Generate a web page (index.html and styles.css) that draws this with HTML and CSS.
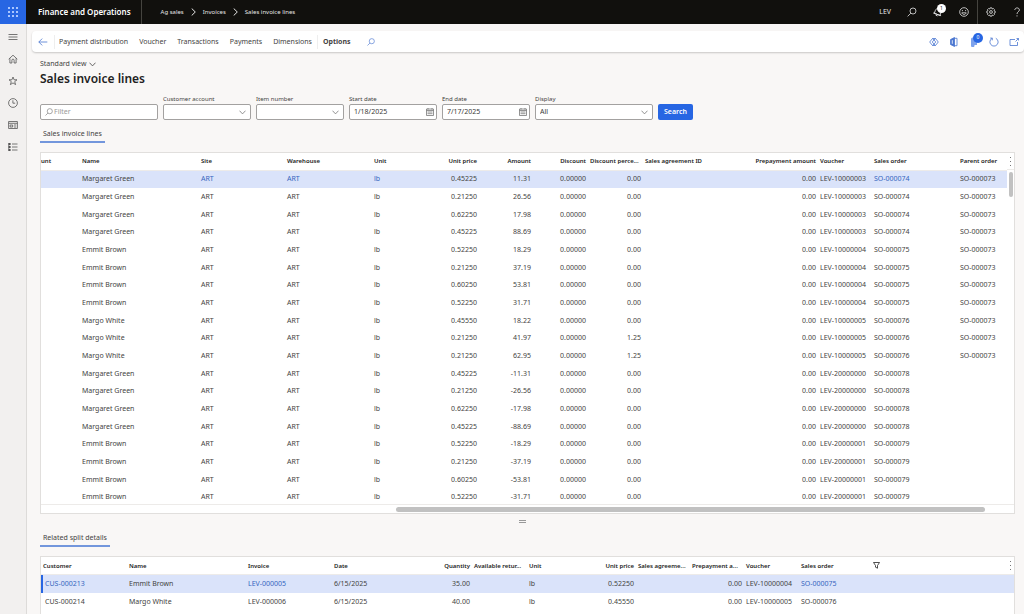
FILE: index.html
```html
<!DOCTYPE html>
<html lang="en">

<head>
    <meta charset="UTF-8">
    <meta name="viewport" content="width=device-width, initial-scale=1.0">
    <title>Sales invoice lines</title>
    <link rel="stylesheet" href="styles.css">
</head>

<body>
    <header class="topbar">
        <button class="launcher" aria-label="App launcher">
            <svg width="10" height="10" viewBox="0 0 10 10" fill="#a9c6ff">
                <path d="M0 0h2v2H0zM4 0h2v2H4zM8 0h2v2H8zM0 4h2v2H0zM4 4h2v2H4zM8 4h2v2H8zM0 8h2v2H0zM4 8h2v2H4zM8 8h2v2H8z" />
            </svg>
        </button>
        <a href="#" class="brand">Finance and Operations</a>
        <nav class="breadcrumb" aria-label="Breadcrumb">
            <a href="#">Ag sales</a>
            <svg width="5" height="8" viewBox="0 0 5 8" class="line"><path d="M.7.5 4.3 4 .7 7.5" /></svg>
            <a href="#">Invoices</a>
            <svg width="5" height="8" viewBox="0 0 5 8" class="line"><path d="M.7.5 4.3 4 .7 7.5" /></svg>
            <a href="#">Sales invoice lines</a>
        </nav>
        <div class="top-tools">
            <span class="company">LEV</span>
            <button aria-label="Search">
                <svg width="10" height="10" viewBox="0 0 10 10" class="line"><circle cx="6" cy="4" r="3" /><path d="M3.8 6.2.6 9.4" /></svg>
            </button>
            <button class="has-badge" aria-label="Notifications">
                <svg width="10" height="10" viewBox="0 0 10 10" class="line"><path d="M2 7.5V4.3a3 3 0 0 1 6 0v3.2zM.8 7.5h8.4M4 8.8h2" transform="rotate(20 5 5)" /></svg>
                <span class="badge light">1</span>
            </button>
            <button aria-label="Feedback">
                <svg width="10" height="10" viewBox="0 0 10 10" class="line"><circle cx="5" cy="5" r="4.3" /><path d="M2.8 5.800c.7 2.200 3.700 2.200 4.400 0zM3.4 3v1.200M6.600 3v1.200" /></svg>
            </button>
            <button class="divided" aria-label="Settings">
                <svg width="10" height="10" viewBox="0 0 10 10" class="line"><circle cx="5" cy="5" r="1.4" /><path d="m4.200.8h1.600l.4 1.200 1.200-.5 1.100 1.100-.5 1.200 1.200.4v1.600l-1.200.4.5 1.200-1.100 1.100-1.200-.5-.4 1.200H4.200L3.800 8l-1.200.5-1.100-1.100.5-1.200-1.200-.4V4.200L2 3.800l-.5-1.200 1.100-1.100 1.200.5z" /></svg>
            </button>
            <button class="help" aria-label="Help">
                <svg width="10" height="10" viewBox="0 0 10 10" class="line"><path d="M2.8 3C2.8.2 7.4.2 7.4 3 7.4 4.8 5 4.7 5 7M5 8.3v1.2" /></svg>
            </button>
        </div>
    </header>

    <div class="shell">
        <nav class="sidebar" aria-label="Main">
            <button aria-label="Expand navigation">
                <svg width="10" height="10" viewBox="0 0 10 10" class="line"><path d="M.5 2.5h9M.5 5h9M.5 7.5h9" /></svg>
            </button>
            <button aria-label="Home">
                <svg width="10" height="10" viewBox="0 0 10 10" class="line"><path d="M.7 5.2 5 1.2l4.300 4M1.900 4.300V9h2V6.200a1.100 1.100 0 0 1 2.200 0V9h2V4.300" /></svg>
            </button>
            <button aria-label="Favorites">
                <svg width="10" height="10" viewBox="0 0 10 10" class="line"><path d="m5 1 1.100 2.800h2.900L6.700 5.600l.9 3L5 6.900 2.400 8.600l.9-3L1 3.800h2.900z" /></svg>
            </button>
            <button aria-label="Recent">
                <svg width="10" height="10" viewBox="0 0 10 10" class="line"><circle cx="5" cy="5" r="4.4" /><path d="M4.900 2.300V5.200h2.300" /></svg>
            </button>
            <button aria-label="Workspaces">
                <svg width="10" height="10" viewBox="0 0 10 10" class="line"><path d="M.6 1.500h8.800v7H.6zM.6 3.300h8.800M2.100 5h2.600v2H2.100zM6 5h2.200M6 7h2.200" /></svg>
            </button>
            <button aria-label="Modules">
                <svg width="10" height="10" viewBox="0 0 10 10" class="line"><path d="M.6 2h2M.6 5h2M.6 8h2" stroke-width="2" /><path d="M.8 1v8M4 2h5.500M4 5h5.500M4 8h5.500" /></svg>
            </button>
        </nav>

        <main class="content">
            <div class="action-bar">
                <button class="icon-btn back" aria-label="Back">
                    <svg width="10" height="8" viewBox="0 0 10 8" class="line"><path d="M9.300 4H.8M4.200.6.8 4l3.400 3.400" /></svg>
                </button>
                <div class="menu">
                    <button>Payment distribution</button>
                    <button>Voucher</button>
                    <button>Transactions</button>
                    <button>Payments</button>
                    <button>Dimensions</button>
                </div>
                <button class="options">Options</button>
                <button class="icon-btn" aria-label="Search actions">
                    <svg width="8" height="8" viewBox="0 0 10 10" class="line"><circle cx="6" cy="4" r="3.2" /><path d="M3.700 6.300.6 9.400" /></svg>
                </button>
                <div class="page-tools">
                    <button class="icon-btn" aria-label="Power Apps">
                        <svg width="10" height="10" viewBox="0 0 10 10" class="line"><path d="M3.500 1.500h3L9.300 5 6.500 8.500h-3L.7 5zM3.500 1.500 6.800 5 3.500 8.500M6.500 1.500 3.200 5l3.300 3.500" /></svg>
                    </button>
                    <button class="icon-btn" aria-label="Office">
                        <svg width="10" height="10" viewBox="0 0 10 10" class="line"><path d="M5 1.300h3v7.400H5" /><path d="M1.500 2.500 5.500.5v9l-4-2z" fill="currentColor" /><path d="M3.300 3.200v3.600" stroke="#fff" /></svg>
                    </button>
                    <button class="icon-btn has-badge" aria-label="Attachments">
                        <svg width="10" height="10" viewBox="0 0 10 10"><path d="M2 2a1.500 1.500 0 0 1 1.500-1.500H8V8H5.500v.5a1.700 1.700 0 0 1-3.500 0z" fill="#7da2ec" /></svg>
                        <span class="badge">0</span>
                    </button>
                    <button class="icon-btn" aria-label="Refresh">
                        <svg width="10" height="10" viewBox="0 0 10 10" class="line"><path d="M6.800 1.300a4.100 4.100 0 1 1-3.600 0M3.300 3.300V1.100H1.200" /></svg>
                    </button>
                    <button class="icon-btn" aria-label="Open in new window">
                        <svg width="10" height="10" viewBox="0 0 10 10" class="line"><path d="M6 2.500H1v6h7.500V5M6.500 4.500l3-3M7.500 1.500h2v2" /></svg>
                    </button>
                </div>
            </div>

            <div class="page">
                <button class="view-picker">Standard view
                    <svg width="7" height="5" viewBox="0 0 7 5" class="line"><path d="m.5.7 3 3.200 3-3.200" /></svg>
                </button>
                <h1>Sales invoice lines</h1>

                <form class="filters">
                    <div class="field wide">
                        <div class="control">
                            <svg width="8" height="8" viewBox="0 0 10 10" class="line"><circle cx="6" cy="4" r="3.2" /><path d="M3.700 6.300.6 9.400" /></svg>
                            <input type="text" placeholder="Filter" aria-label="Filter">
                        </div>
                    </div>
                    <div class="field">
                        <label for="customer">Customer account</label>
                        <div class="control">
                            <select id="customer"><option></option></select>
                            <svg width="7" height="5" viewBox="0 0 7 5" class="line"><path d="m.5.7 3 3.200 3-3.200" /></svg>
                        </div>
                    </div>
                    <div class="field">
                        <label for="item">Item number</label>
                        <div class="control">
                            <select id="item"><option></option></select>
                            <svg width="7" height="5" viewBox="0 0 7 5" class="line"><path d="m.5.7 3 3.200 3-3.200" /></svg>
                        </div>
                    </div>
                    <div class="field">
                        <label for="start">Start date</label>
                        <div class="control date">
                            <input type="text" id="start" value="1/18/2025">
                            <svg width="8" height="8" viewBox="0 0 8 8" class="line"><path d="M.5 1h7v6.500h-7zM.5 2.500h7M2 0v1.500M6 0v1.500M1.500 4h5M1.500 5.700h5" /></svg>
                        </div>
                    </div>
                    <div class="field">
                        <label for="end">End date</label>
                        <div class="control date">
                            <input type="text" id="end" value="7/17/2025">
                            <svg width="8" height="8" viewBox="0 0 8 8" class="line"><path d="M.5 1h7v6.500h-7zM.5 2.500h7M2 0v1.500M6 0v1.500M1.500 4h5M1.500 5.700h5" /></svg>
                        </div>
                    </div>
                    <div class="field wide">
                        <label for="display">Display</label>
                        <div class="control">
                            <select id="display"><option>All</option></select>
                            <svg width="7" height="5" viewBox="0 0 7 5" class="line"><path d="m.5.7 3 3.200 3-3.200" /></svg>
                        </div>
                    </div>
                    <button type="button" class="search-btn">Search</button>
                </form>

                <h2 class="tab">Sales invoice lines</h2>
                <section class="grid lines-grid">
                    <div class="grid-body">
                        <table>
                            <colgroup>
                                <col class="w-39"><col class="w-119"><col class="w-86"><col class="w-87"><col class="w-53">
                                <col class="w-54"><col class="w-54"><col class="w-55"><col class="w-55"><col class="w-108">
                                <col class="w-67"><col class="w-54"><col class="w-86"><col class="w-49">
                            </colgroup>
                            <thead>
                                <tr>
                                    <th class="cut">unt</th>
                                    <th>Name</th>
                                    <th>Site</th>
                                    <th>Warehouse</th>
                                    <th>Unit</th>
                                    <th class="num">Unit price</th>
                                    <th class="num">Amount</th>
                                    <th class="num">Discount</th>
                                    <th>Discount perce...</th>
                                    <th>Sales agreement ID</th>
                                    <th class="num">Prepayment amount</th>
                                    <th>Voucher</th>
                                    <th>Sales order</th>
                                    <th>Parent order</th>
                                </tr>
                            </thead>
                            <tbody id="lines"></tbody>
                        </table>
                        <div class="rail">
                            <button class="more" aria-label="Grid options">
                                <svg width="1" height="9" viewBox="0 0 1 9" fill="#777"><path d="M0 0h1v1H0zM0 4h1v1H0zM0 8h1v1H0z" /></svg>
                            </button>
                            <div class="v-thumb"></div>
                        </div>
                    </div>
                    <div class="h-scroll"><div class="h-thumb"></div></div>
                </section>

                <div class="splitter"></div>

                <h2 class="tab">Related split details</h2>
                <section class="grid details-grid">
                    <div class="grid-body">
                        <table>
                            <colgroup>
                                <col class="w-86"><col class="w-119"><col class="w-86"><col class="w-87"><col class="w-53">
                                <col class="w-55"><col class="w-54"><col class="w-55"><col class="w-54"><col class="w-54">
                                <col class="w-55"><col class="w-72"><col>
                            </colgroup>
                            <thead>
                                <tr>
                                    <th>Customer</th>
                                    <th>Name</th>
                                    <th>Invoice</th>
                                    <th>Date</th>
                                    <th class="num">Quantity</th>
                                    <th>Available retur...</th>
                                    <th>Unit</th>
                                    <th class="num">Unit price</th>
                                    <th>Sales agreeme...</th>
                                    <th>Prepayment a...</th>
                                    <th>Voucher</th>
                                    <th>Sales order</th>
                                    <th>
                                        <div class="head-tools">
                                            <svg width="7" height="7" viewBox="0 0 7 7" class="line"><path d="M.5.5h6l-2 3v2.700l-2-1V3.500z" /></svg>
                                            <button class="more" aria-label="Grid options">
                                                <svg width="1" height="9" viewBox="0 0 1 9" fill="#777"><path d="M0 0h1v1H0zM0 4h1v1H0zM0 8h1v1H0z" /></svg>
                                            </button>
                                        </div>
                                    </th>
                                </tr>
                            </thead>
                            <tbody>
                                <tr class="selected marked">
                                    <td class="key"><a href="#">CUS-000213</a></td>
                                    <td>Emmit Brown</td>
                                    <td><a href="#">LEV-000005</a></td>
                                    <td>6/15/2025</td>
                                    <td class="num">35.00</td>
                                    <td></td>
                                    <td>lb</td>
                                    <td class="num">0.52250</td>
                                    <td></td>
                                    <td class="num">0.00</td>
                                    <td>LEV-10000004</td>
                                    <td><a href="#">SO-000075</a></td>
                                    <td></td>
                                </tr>
                                <tr>
                                    <td class="key">CUS-000214</td>
                                    <td>Margo White</td>
                                    <td>LEV-000006</td>
                                    <td>6/15/2025</td>
                                    <td class="num">40.00</td>
                                    <td></td>
                                    <td>lb</td>
                                    <td class="num">0.45550</td>
                                    <td></td>
                                    <td class="num">0.00</td>
                                    <td>LEV-10000005</td>
                                    <td>SO-000076</td>
                                    <td></td>
                                </tr>
                            </tbody>
                        </table>
                    </div>
                </section>
            </div>
        </main>
    </div>

    <script src="script.js"></script>
</body>

</html>
```
FILE: styles.css
```css
* {
    box-sizing: border-box;
}

body {
    margin: 0;
    height: 100vh;
    display: flex;
    flex-direction: column;
    overflow: hidden;
    background: #f9f7f6;
    color: #444342;
    font-family: "Noto Sans", "Open Sans", sans-serif;
    font-size: 7px;
    line-height: 10px;
}

button {
    display: flex;
    align-items: center;
    justify-content: center;
    padding: 0;
    border: 0;
    background: none;
    color: inherit;
    font: inherit;
    cursor: pointer;
}

a {
    color: inherit;
    text-decoration: none;
}

svg {
    display: block;
    flex: none;
}

.line {
    fill: none;
    stroke: currentColor;
    stroke-width: 0.8;
}

/* Top bar */
.topbar {
    display: flex;
    align-items: stretch;
    flex: none;
    height: 24px;
    background: #11100d;
    color: #e6e6e6;
}

.launcher {
    width: 26px;
    background: #2766e3;
}

.brand {
    display: flex;
    align-items: center;
    padding: 0 10px 0 12px;
    border-right: 1px solid #45443f;
    font-size: 8px;
    font-weight: 600;
    color: #fff;
}

.breadcrumb {
    display: flex;
    align-items: center;
    gap: 7px;
    padding-left: 19px;
    font-size: 6px;
}

.breadcrumb .line {
    stroke-width: 1;
}

.top-tools {
    display: flex;
    margin-left: auto;
}

.top-tools button {
    width: 26px;
}

.top-tools .divided {
    border-left: 1px solid #45443f;
}

.top-tools .help {
    width: 21px;
    padding-left: 6px;
}

.company {
    align-self: center;
    padding-right: 8px;
}

.has-badge {
    position: relative;
}

.badge {
    position: absolute;
    top: 4px;
    right: 5px;
    width: 9px;
    height: 9px;
    border-radius: 50%;
    background: #2766e3;
    color: #fff;
    font-size: 5px;
    line-height: 9px;
    text-align: center;
}

.badge.light {
    background: #fff;
    color: #222;
}

/* Side navigation */
.shell {
    display: flex;
    flex: 1;
    min-height: 0;
}

.sidebar {
    display: flex;
    flex-direction: column;
    flex: none;
    width: 27px;
    padding-top: 2px;
    border-right: 1px solid #dddbd9;
    background: #f2f0ef;
    color: #555;
}

.sidebar button {
    height: 22px;
}

/* Action bar */
.content {
    display: flex;
    flex-direction: column;
    flex: 1;
    min-width: 0;
}

.action-bar {
    display: flex;
    align-items: center;
    flex: none;
    height: 21px;
    margin: 7px 0 0 5px;
    border-radius: 4px;
    background: #fff;
    box-shadow: 0 1px 2px rgba(0, 0, 0, 0.2);
}

.icon-btn {
    color: #4a76d0;
}

.back {
    width: 22px;
}

.menu {
    display: flex;
    gap: 11px;
    padding: 2px 5px 2px 4px;
    border: solid #eee;
    border-width: 0 1px;
}

.options {
    padding: 0 16px 0 5px;
    font-weight: 700;
}

.page-tools {
    display: flex;
    margin-left: auto;
}

.page-tools button {
    width: 20px;
    height: 20px;
}

.page-tools .badge {
    top: 1px;
    right: 1px;
    width: 10px;
    height: 10px;
}

/* Page */
.page {
    display: flex;
    flex-direction: column;
    flex: 1;
    min-height: 0;
    padding: 7px 9px 0 13px;
}

.view-picker {
    align-self: flex-start;
    gap: 3px;
}

h1 {
    margin: 2px 0 7px;
    font-size: 12px;
    font-weight: 600;
    line-height: 16px;
    color: #222;
}

.filters {
    display: flex;
    align-items: flex-end;
    gap: 5px;
}

.field {
    width: 88px;
}

.field.wide {
    width: 118px;
}

.field label {
    display: block;
    font-size: 6px;
}

.control {
    display: flex;
    align-items: center;
    height: 16px;
    padding: 0 4px;
    border: 1px solid #a3a1a0;
    border-radius: 2px;
    background: #fff;
    color: #777;
}

.control.date {
    padding-right: 2px;
}

.control input,
.control select {
    flex: 1;
    min-width: 0;
    padding: 0;
    border: 0;
    outline: 0;
    background: none;
    appearance: none;
    color: #3b3a39;
    font: inherit;
}

.control svg:first-child {
    margin-right: 1px;
}

.control input::placeholder {
    color: #999;
}

.search-btn {
    height: 16px;
    padding: 0 6px;
    border-radius: 2px;
    background: #2766e3;
    color: #fff;
    font-weight: 600;
}

.tab {
    align-self: flex-start;
    flex: none;
    margin: 8px 0 9px;
    padding: 0 3px 2px;
    border-bottom: 2px solid #7396dc;
    font-size: 7px;
    font-weight: 400;
    line-height: 11px;
}

/* Grids */
.grid {
    display: flex;
    flex-direction: column;
    border: 1px solid #e1dfdd;
    background: #fff;
}

.lines-grid {
    flex: 1;
    min-height: 0;
}

.details-grid {
    flex: none;
    height: 58px;
    border-bottom: 0;
}

.grid-body {
    display: flex;
    align-items: flex-start;
    flex: 1;
    min-height: 0;
    overflow: hidden;
}

table {
    flex: 1;
    width: 100%;
    table-layout: fixed;
    border-collapse: collapse;
}

th,
td {
    padding: 0 2px;
    overflow: hidden;
    white-space: nowrap;
    text-overflow: ellipsis;
    text-align: left;
}

th {
    height: 17px;
    border-bottom: 1px solid #edebe9;
    font-size: 6px;
    font-weight: 600;
    color: #222;
}

td {
    height: 18px;
}

.lines-grid tr:nth-child(3n) td {
    height: 17px;
}

.num {
    text-align: right;
}

th.cut {
    padding: 0;
}

.details-grid td.key {
    padding-left: 4px;
}

.selected {
    background: #dae3fa;
}

.selected a {
    color: #3566c0;
}

.marked .key {
    box-shadow: inset 2px 0 #2766e3;
}

.w-39 { width: 39px; }
.w-49 { width: 49px; }
.w-53 { width: 53px; }
.w-54 { width: 54px; }
.w-55 { width: 55px; }
.w-67 { width: 67px; }
.w-72 { width: 72px; }
.w-86 { width: 86px; }
.w-87 { width: 87px; }
.w-108 { width: 108px; }
.w-119 { width: 119px; }

.rail {
    flex: none;
    width: 7px;
}

.more {
    width: 7px;
    height: 17px;
}

.rail .more {
    border-bottom: 1px solid #edebe9;
}

.v-thumb {
    width: 4px;
    height: 25px;
    margin: 2px auto;
    border-radius: 2px;
    background: #c1c1c1;
}

.h-scroll {
    display: flex;
    align-items: center;
    flex: none;
    height: 9px;
    padding: 0 29px 0 355px;
    border-top: 1px solid #edebe9;
}

.h-thumb {
    flex: 1;
    height: 5px;
    border-radius: 3px;
    background: #c1c1c1;
}

.splitter {
    align-self: center;
    flex: none;
    width: 7px;
    height: 3px;
    margin: 6px 10px 1px 0;
    border: solid #999;
    border-width: 1px 0;
}

.head-tools {
    display: flex;
    align-items: center;
    justify-content: space-between;
    margin-right: -2px;
}
```
FILE: script.js
```js
// name, unit price, amount, discount %, voucher, sales order, parent order
const lines = [
    ['Margaret Green', '0.45225', '11.31', '0.00', 'LEV-10000003', 'SO-000074', 'SO-000073'],
    ['Margaret Green', '0.21250', '26.56', '0.00', 'LEV-10000003', 'SO-000074', 'SO-000073'],
    ['Margaret Green', '0.62250', '17.98', '0.00', 'LEV-10000003', 'SO-000074', 'SO-000073'],
    ['Margaret Green', '0.45225', '88.69', '0.00', 'LEV-10000003', 'SO-000074', 'SO-000073'],
    ['Emmit Brown', '0.52250', '18.29', '0.00', 'LEV-10000004', 'SO-000075', 'SO-000073'],
    ['Emmit Brown', '0.21250', '37.19', '0.00', 'LEV-10000004', 'SO-000075', 'SO-000073'],
    ['Emmit Brown', '0.60250', '53.81', '0.00', 'LEV-10000004', 'SO-000075', 'SO-000073'],
    ['Emmit Brown', '0.52250', '31.71', '0.00', 'LEV-10000004', 'SO-000075', 'SO-000073'],
    ['Margo White', '0.45550', '18.22', '0.00', 'LEV-10000005', 'SO-000076', 'SO-000073'],
    ['Margo White', '0.21250', '41.97', '1.25', 'LEV-10000005', 'SO-000076', 'SO-000073'],
    ['Margo White', '0.21250', '62.95', '1.25', 'LEV-10000005', 'SO-000076', 'SO-000073'],
    ['Margaret Green', '0.45225', '-11.31', '0.00', 'LEV-20000000', 'SO-000078', ''],
    ['Margaret Green', '0.21250', '-26.56', '0.00', 'LEV-20000000', 'SO-000078', ''],
    ['Margaret Green', '0.62250', '-17.98', '0.00', 'LEV-20000000', 'SO-000078', ''],
    ['Margaret Green', '0.45225', '-88.69', '0.00', 'LEV-20000000', 'SO-000078', ''],
    ['Emmit Brown', '0.52250', '-18.29', '0.00', 'LEV-20000001', 'SO-000079', ''],
    ['Emmit Brown', '0.21250', '-37.19', '0.00', 'LEV-20000001', 'SO-000079', ''],
    ['Emmit Brown', '0.60250', '-53.81', '0.00', 'LEV-20000001', 'SO-000079', ''],
    ['Emmit Brown', '0.52250', '-31.71', '0.00', 'LEV-20000001', 'SO-000079', '']
];

// The selected row shows its lookup values as links
function cell(text, selected) {
    return selected ? `<td><a href="#">${text}</a></td>` : `<td>${text}</td>`;
}

document.getElementById('lines').innerHTML = lines.map((line, index) => {
    const [name, price, amount, percent, voucher, order, parent] = line;
    const selected = index === 0;
    return `<tr class="${selected ? 'selected' : ''}">
        <td></td>
        <td>${name}</td>
        ${cell('ART', selected)}
        ${cell('ART', selected)}
        ${cell('lb', selected)}
        <td class="num">${price}</td>
        <td class="num">${amount}</td>
        <td class="num">0.00000</td>
        <td class="num">${percent}</td>
        <td></td>
        <td class="num">0.00</td>
        <td>${voucher}</td>
        ${cell(order, selected)}
        <td>${parent}</td>
    </tr>`;
}).join('');
```
